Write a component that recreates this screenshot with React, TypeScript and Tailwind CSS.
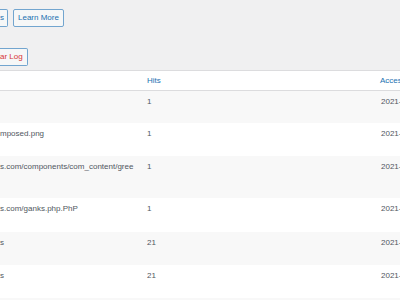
const rows = [
  { path: "", hits: "1", h: "h-[32px]", stripe: true },
  { path: "mposed.png", hits: "1", h: "h-[33px]", stripe: false },
  { path: "s.com/components/com_content/gree", hits: "1", h: "h-[42px]", stripe: true },
  { path: "s.com/ganks.php.PhP", hits: "1", h: "h-[34px]", stripe: false },
  { path: "s", hits: "21", h: "h-[33px]", stripe: true },
  { path: "s", hits: "21", h: "h-[33px]", stripe: false },
  { path: "", hits: "", h: "h-[33px]", stripe: true },
];

export default function App() {
  return (
    <div className="h-[300px] w-[400px] overflow-hidden bg-[#f0f0f1] font-['Liberation_Sans',Arial,sans-serif] text-[8px] leading-[10px] text-[#50575e]">
      <div className="flex gap-[5px] pt-[9px]">
        <button className="flex h-[18px] items-center rounded-r-[2px] border border-l-0 border-[#72a5cf] bg-[#f6f7f7] pr-[3px] text-[#2271b1]">
          s
        </button>
        <button className="flex h-[18px] items-center rounded-[2px] border border-[#72a5cf] bg-[#f6f7f7] px-[4px] text-[#2271b1]">
          Learn More
        </button>
      </div>

      <div className="mt-[21px] flex">
        <button className="flex h-[18px] items-center rounded-r-[2px] border border-l-0 border-[#72a5cf] bg-[#f6f7f7] pr-[4px] text-[#d63638]">
          ar Log
        </button>
      </div>

      <div className="mt-[4px] bg-white">
        <div className="grid h-[21px] grid-cols-[147px_233px_20px] items-center border-y border-[#dcdcde] text-[#2271b1]">
          <div />
          <div>Hits</div>
          <div className="whitespace-nowrap">Access Date</div>
        </div>
        {rows.map((r, i) => (
          <div
            key={i}
            className={`grid grid-cols-[147px_233px_20px] pt-[6px] ${r.h} ${r.stripe ? "bg-[#f8f8f8]" : "bg-white"}`}
          >
            <div className="whitespace-nowrap">{r.path}</div>
            <div>{r.hits}</div>
            <div className="pl-[1px] whitespace-nowrap">{r.hits ? "2021-06-14" : ""}</div>
          </div>
        ))}
      </div>
    </div>
  );
}
